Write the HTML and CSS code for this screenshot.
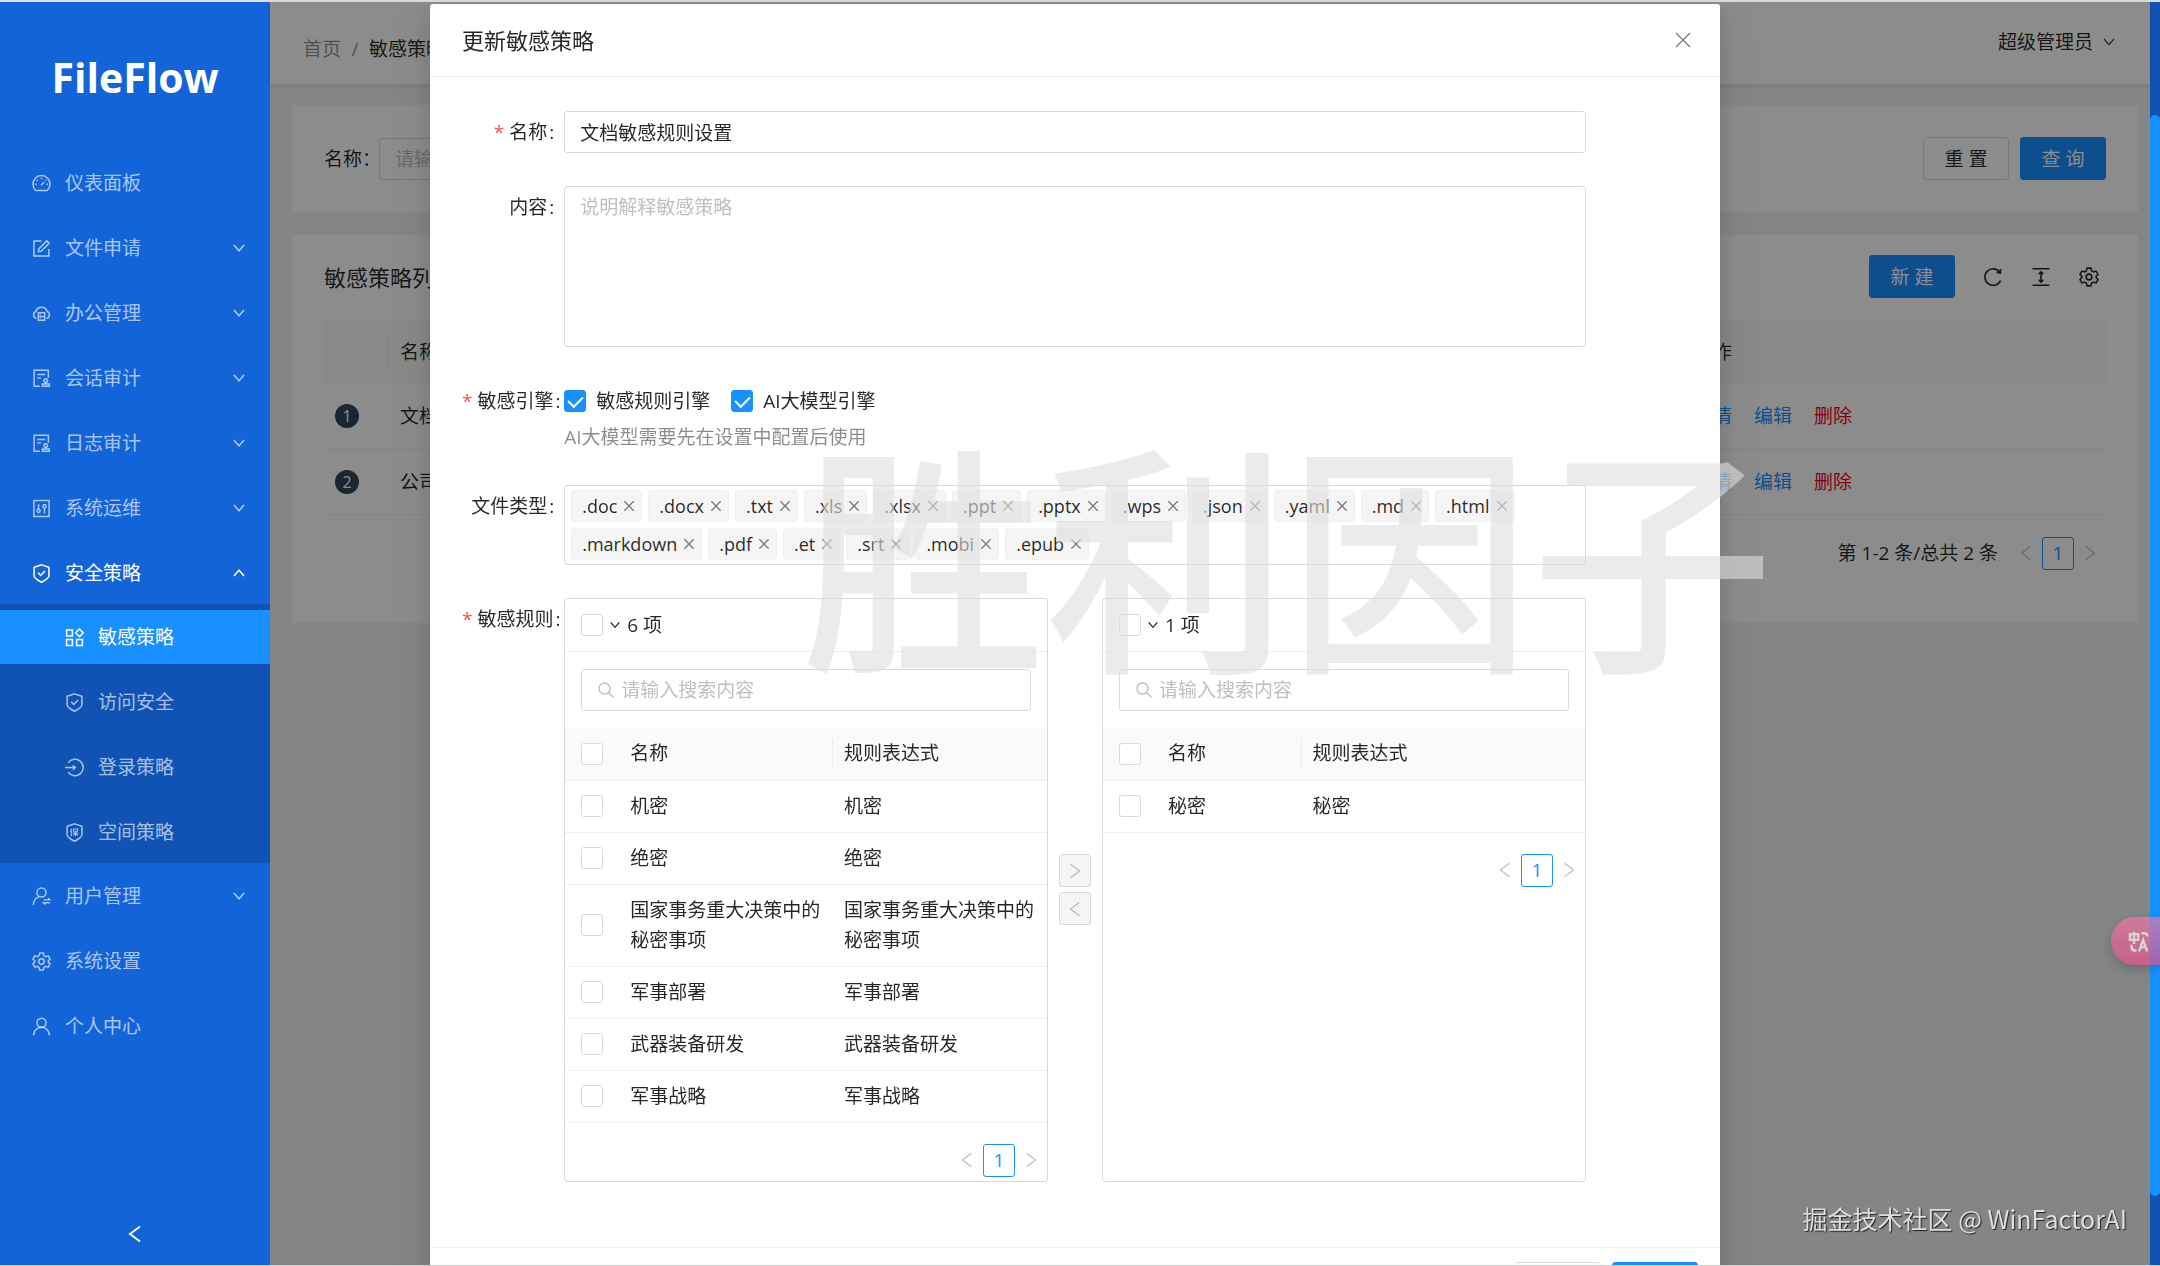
FILE: index.html
```html
<!DOCTYPE html>
<html lang="zh-CN">
<head>
<meta charset="utf-8">
<meta name="viewport" content="width=device-width, initial-scale=1">
<title>FileFlow</title>
<link rel="stylesheet" href="styles.css">
</head>
<body>
<svg class="sprite" aria-hidden="true">
  <symbol id="i-down" viewBox="0 0 18 18"><path d="M2.500 5l6.500 7.500L15.500 5"/></symbol>
  <symbol id="i-up" viewBox="0 0 18 18"><path d="M2.500 13L9 5.500l6.500 7.500"/></symbol>
  <symbol id="i-left" viewBox="0 0 18 18"><path d="M14 1.500L4 9l10 7.500"/></symbol>
  <symbol id="i-right" viewBox="0 0 18 18"><path d="M4 1.500L14 9 4 16.500"/></symbol>
  <symbol id="i-close" viewBox="0 0 18 18"><path d="M2 2l14 14M16 2L2 16"/></symbol>
  <symbol id="i-search" viewBox="0 0 18 18"><circle cx="7.5" cy="7.5" r="5.5"/><path d="M11.5 11.5l5 5"/></symbol>
  <symbol id="i-dashboard" viewBox="0 0 18 18"><path d="M3.6 15.6A8.1 8.1 0 1 1 14.4 15.6z"/><path d="M8.6 10.6l3-3M9 3.6v1.4M4.4 5.4l1 1M2.8 9.8h1.4M13.8 9.8h1.4M13.6 5.4l-.8.8"/></symbol>
  <symbol id="i-form" viewBox="0 0 18 18"><path d="M9 2H1.800v14.200H16V9.500"/><path d="M6 12l.4-2.600L14 1.800l2.200 2.200L8.600 11.600z"/></symbol>
  <symbol id="i-cloud" viewBox="0 0 18 18"><path d="M4.200 13.600A3.500 3.500 0 0 1 3.600 7 5.700 5.700 0 0 1 14.400 7a3.500 3.500 0 0 1-.6 6.600"/><path d="M6 8.200h6v7.200H6zM6 11.800h6M7.800 10h.6M7.800 13.600h.6"/></symbol>
  <symbol id="i-audit" viewBox="0 0 18 18"><path d="M7.500 16.400H2V1.200h13.500v7M5 5.200h7.500M5 8.400h3.500"/><circle cx="13" cy="11" r="1.700"/><path d="M13 12.700v1.300M9.800 16.400v-2.200h6.600v2.200z"/></symbol>
  <symbol id="i-control" viewBox="0 0 18 18"><path d="M1.800 1.500h14.400v15H1.800zM6.200 5v4.600M6.200 12.600V13.400M11.800 4.800v.6M11.800 8.400v5"/><circle cx="6.200" cy="11.100" r="1.500"/><circle cx="11.800" cy="6.900" r="1.500"/></symbol>
  <symbol id="i-safety" viewBox="0 0 18 18"><path d="M9 .8l7 2.300v8c0 1.600-4 4.600-7 6.200-3-1.600-7-4.600-7-6.200v-8z"/><path d="M5.900 8.400l2.400 2.500 4-4.300"/></symbol>
  <symbol id="i-appstore" viewBox="0 0 18 18"><path d="M1.500 2h5.500v5.500H1.500zM1.500 11h5.500v5.500H1.500zM11 11h5.500v5.500H11zM13.700 1l3.600 3.600-3.600 3.600-3.600-3.600z"/></symbol>
  <symbol id="i-login" viewBox="0 0 18 18"><path d="M3 4.600A7.800 7.800 0 1 1 3 13.400M0 9h9.400M7.400 7l2.400 2-2.400 2"/></symbol>
  <symbol id="i-insurance" viewBox="0 0 18 18"><path d="M9 .8l7 2.300v8c0 1.600-4 4.600-7 6.200-3-1.600-7-4.600-7-6.200v-8z"/><path d="M6.400 5.400l-1.200 3M6 7.500v5M8 5.700h4v2.200H8zM7.300 9.500h5.400M10 8v4.600M10 9.700l-2.200 2M10 9.700l2.200 2" stroke-width="1"/></symbol>
  <symbol id="i-switch" viewBox="0 0 18 18"><circle cx="9" cy="5.200" r="4.300"/><path d="M1.200 17c.4-4 2.400-6.600 5.400-7.600M11 12.200h6l-1.600-1.600M17 15h-6l1.600 1.600"/></symbol>
  <symbol id="i-setting" viewBox="0 0 18 18"><path d="M7.300 1h3.400l.6 2.400 1.700 1 2.400-.7 1.700 3-1.700 1.700v1.200l1.700 1.700-1.700 3-2.400-.7-1.700 1-.6 2.400H7.300l-.6-2.400-1.700-1-2.400.7-1.700-3 1.700-1.700V8.400L.9 6.700l1.700-3 2.400.7 1.700-1z"/><circle cx="9" cy="9" r="2.600"/></symbol>
  <symbol id="i-user" viewBox="0 0 18 18"><circle cx="9" cy="5.400" r="4.300"/><path d="M1.400 17.400c.4-4.400 3.400-7.700 7.600-7.700s7.200 3.300 7.600 7.700"/></symbol>
  <symbol id="i-reload" viewBox="0 0 18 18"><path d="M15.800 12.200A7.400 7.400 0 1 1 15 4.600M15.800 1.800l-.2 3.600-3.400-.6"/></symbol>
  <symbol id="i-height" viewBox="0 0 18 18"><path d="M1.400 1.600h15.200M1.400 16.400h15.200M9 4.600v8.800M7 6.400l2-2 2 2M7 11.600l2 2 2-2"/></symbol>
</svg>

<div class="app">
  <aside class="sidebar">
    <h1 class="logo">FileFlow</h1>
    <nav>
      <ul class="menu">
        <li><a class="menu-item" href="#"><svg class="icon"><use href="#i-dashboard"/></svg><span>仪表面板</span></a></li>
        <li><a class="menu-item" href="#"><svg class="icon"><use href="#i-form"/></svg><span>文件申请</span><svg class="icon arrow"><use href="#i-down"/></svg></a></li>
        <li><a class="menu-item" href="#"><svg class="icon"><use href="#i-cloud"/></svg><span>办公管理</span><svg class="icon arrow"><use href="#i-down"/></svg></a></li>
        <li><a class="menu-item" href="#"><svg class="icon"><use href="#i-audit"/></svg><span>会话审计</span><svg class="icon arrow"><use href="#i-down"/></svg></a></li>
        <li><a class="menu-item" href="#"><svg class="icon"><use href="#i-audit"/></svg><span>日志审计</span><svg class="icon arrow"><use href="#i-down"/></svg></a></li>
        <li><a class="menu-item" href="#"><svg class="icon"><use href="#i-control"/></svg><span>系统运维</span><svg class="icon arrow"><use href="#i-down"/></svg></a></li>
        <li>
          <a class="menu-item open" href="#"><svg class="icon"><use href="#i-safety"/></svg><span>安全策略</span><svg class="icon arrow"><use href="#i-up"/></svg></a>
          <ul class="submenu">
            <li><a class="menu-item selected" href="#"><svg class="icon"><use href="#i-appstore"/></svg><span>敏感策略</span></a></li>
            <li><a class="menu-item" href="#"><svg class="icon"><use href="#i-safety"/></svg><span>访问安全</span></a></li>
            <li><a class="menu-item" href="#"><svg class="icon"><use href="#i-login"/></svg><span>登录策略</span></a></li>
            <li><a class="menu-item" href="#"><svg class="icon"><use href="#i-insurance"/></svg><span>空间策略</span></a></li>
          </ul>
        </li>
        <li><a class="menu-item" href="#"><svg class="icon"><use href="#i-switch"/></svg><span>用户管理</span><svg class="icon arrow"><use href="#i-down"/></svg></a></li>
        <li><a class="menu-item" href="#"><svg class="icon"><use href="#i-setting"/></svg><span>系统设置</span></a></li>
        <li><a class="menu-item" href="#"><svg class="icon"><use href="#i-user"/></svg><span>个人中心</span></a></li>
      </ul>
    </nav>
    <button class="collapse" type="button" aria-label="收起"><svg class="icon"><use href="#i-left"/></svg></button>
  </aside>

  <div class="page">
    <header class="topbar">
      <nav class="breadcrumb"><a href="#">首页</a><span class="sep">/</span><span>敏感策略</span></nav>
      <button class="account" type="button">超级管理员<svg class="icon"><use href="#i-down"/></svg></button>
    </header>
    <main class="content">
      <form class="card search-card">
        <label for="q-name">名称：</label>
        <input id="q-name" class="input query" type="text" placeholder="请输入">
        <button class="btn" type="reset">重 置</button>
        <button class="btn primary" type="button">查 询</button>
      </form>
      <section class="card list-card">
        <div class="toolbar">
          <h2>敏感策略列表</h2>
          <button class="btn primary" type="button">新 建</button>
          <button class="tool" type="button" aria-label="刷新"><svg class="icon"><use href="#i-reload"/></svg></button>
          <button class="tool" type="button" aria-label="密度"><svg class="icon"><use href="#i-height"/></svg></button>
          <button class="tool" type="button" aria-label="列设置"><svg class="icon"><use href="#i-setting"/></svg></button>
        </div>
        <table class="list">
          <colgroup><col class="c-index"><col><col class="c-actions"></colgroup>
          <thead><tr><th></th><th>名称</th><th>操作</th></tr></thead>
          <tbody>
            <tr><td><span class="index">1</span></td><td>文档敏感规则设置</td><td><div class="actions"><a href="#">详情</a><a href="#">编辑</a><a class="danger" href="#">删除</a></div></td></tr>
            <tr><td><span class="index">2</span></td><td>公司</td><td><div class="actions"><a href="#">详情</a><a href="#">编辑</a><a class="danger" href="#">删除</a></div></td></tr>
          </tbody>
        </table>
        <div class="pager list-pager">
          <span class="total">第 1-2 条/总共 2 条</span>
          <button type="button" aria-label="上一页"><svg class="icon"><use href="#i-left"/></svg></button>
          <button class="current" type="button">1</button>
          <button type="button" aria-label="下一页"><svg class="icon"><use href="#i-right"/></svg></button>
        </div>
      </section>
    </main>
    <div class="mask"></div>
  </div>

  <div class="scrollbar"><div class="thumb"></div></div>
</div>

<div class="modal-wrap">
  <section class="modal" role="dialog" aria-labelledby="dlg-title">
    <header class="modal-head">
      <h2 id="dlg-title">更新敏感策略</h2>
      <button type="button" aria-label="关闭"><svg class="icon"><use href="#i-close"/></svg></button>
    </header>
    <form class="modal-body">
      <div class="field">
        <label class="label required" for="f-name">名称<i>:</i></label>
        <input id="f-name" class="input" type="text" value="文档敏感规则设置">
      </div>
      <div class="field">
        <label class="label" for="f-desc">内容<i>:</i></label>
        <textarea id="f-desc" class="input area" placeholder="说明解释敏感策略"></textarea>
      </div>
      <div class="field">
        <span class="label required">敏感引擎<i>:</i></span>
        <div>
          <div class="checks">
            <label><input class="check" type="checkbox" checked>敏感规则引擎</label>
            <label><input class="check" type="checkbox" checked>AI大模型引擎</label>
          </div>
          <p class="help">AI大模型需要先在设置中配置后使用</p>
        </div>
      </div>
      <div class="field">
        <span class="label">文件类型<i>:</i></span>
        <div class="tags">
          <span class="tag">.doc<button type="button" aria-label="移除"><svg class="icon"><use href="#i-close"/></svg></button></span>
          <span class="tag">.docx<button type="button" aria-label="移除"><svg class="icon"><use href="#i-close"/></svg></button></span>
          <span class="tag">.txt<button type="button" aria-label="移除"><svg class="icon"><use href="#i-close"/></svg></button></span>
          <span class="tag">.xls<button type="button" aria-label="移除"><svg class="icon"><use href="#i-close"/></svg></button></span>
          <span class="tag">.xlsx<button type="button" aria-label="移除"><svg class="icon"><use href="#i-close"/></svg></button></span>
          <span class="tag">.ppt<button type="button" aria-label="移除"><svg class="icon"><use href="#i-close"/></svg></button></span>
          <span class="tag">.pptx<button type="button" aria-label="移除"><svg class="icon"><use href="#i-close"/></svg></button></span>
          <span class="tag">.wps<button type="button" aria-label="移除"><svg class="icon"><use href="#i-close"/></svg></button></span>
          <span class="tag">.json<button type="button" aria-label="移除"><svg class="icon"><use href="#i-close"/></svg></button></span>
          <span class="tag">.yaml<button type="button" aria-label="移除"><svg class="icon"><use href="#i-close"/></svg></button></span>
          <span class="tag">.md<button type="button" aria-label="移除"><svg class="icon"><use href="#i-close"/></svg></button></span>
          <span class="tag">.html<button type="button" aria-label="移除"><svg class="icon"><use href="#i-close"/></svg></button></span>
          <span class="tag">.markdown<button type="button" aria-label="移除"><svg class="icon"><use href="#i-close"/></svg></button></span>
          <span class="tag">.pdf<button type="button" aria-label="移除"><svg class="icon"><use href="#i-close"/></svg></button></span>
          <span class="tag">.et<button type="button" aria-label="移除"><svg class="icon"><use href="#i-close"/></svg></button></span>
          <span class="tag">.srt<button type="button" aria-label="移除"><svg class="icon"><use href="#i-close"/></svg></button></span>
          <span class="tag">.mobi<button type="button" aria-label="移除"><svg class="icon"><use href="#i-close"/></svg></button></span>
          <span class="tag">.epub<button type="button" aria-label="移除"><svg class="icon"><use href="#i-close"/></svg></button></span>
        </div>
      </div>
      <div class="field">
        <span class="label required">敏感规则<i>:</i></span>
        <div class="transfer">
          <div class="pane">
            <div class="pane-head"><input class="check" type="checkbox" aria-label="全选"><svg class="icon"><use href="#i-down"/></svg><span>6 项</span></div>
            <label class="search"><svg class="icon"><use href="#i-search"/></svg><input type="text" placeholder="请输入搜索内容" aria-label="搜索"></label>
            <table class="rules">
              <colgroup><col class="c-check"><col><col></colgroup>
              <thead><tr><th><input class="check" type="checkbox" aria-label="全选"></th><th>名称</th><th>规则表达式</th></tr></thead>
              <tbody>
                <tr><td><input class="check" type="checkbox" aria-label="机密"></td><td>机密</td><td>机密</td></tr>
                <tr><td><input class="check" type="checkbox" aria-label="绝密"></td><td>绝密</td><td>绝密</td></tr>
                <tr><td><input class="check" type="checkbox" aria-label="秘密事项"></td><td>国家事务重大决策中的秘密事项</td><td>国家事务重大决策中的秘密事项</td></tr>
                <tr><td><input class="check" type="checkbox" aria-label="军事部署"></td><td>军事部署</td><td>军事部署</td></tr>
                <tr><td><input class="check" type="checkbox" aria-label="武器装备研发"></td><td>武器装备研发</td><td>武器装备研发</td></tr>
                <tr><td><input class="check" type="checkbox" aria-label="军事战略"></td><td>军事战略</td><td>军事战略</td></tr>
              </tbody>
            </table>
            <div class="pager">
              <button type="button" aria-label="上一页"><svg class="icon"><use href="#i-left"/></svg></button>
              <button class="current" type="button">1</button>
              <button type="button" aria-label="下一页"><svg class="icon"><use href="#i-right"/></svg></button>
            </div>
          </div>
          <div class="moves">
            <button type="button" disabled aria-label="右移"><svg class="icon"><use href="#i-right"/></svg></button>
            <button type="button" disabled aria-label="左移"><svg class="icon"><use href="#i-left"/></svg></button>
          </div>
          <div class="pane">
            <div class="pane-head"><input class="check" type="checkbox" aria-label="全选"><svg class="icon"><use href="#i-down"/></svg><span>1 项</span></div>
            <label class="search"><svg class="icon"><use href="#i-search"/></svg><input type="text" placeholder="请输入搜索内容" aria-label="搜索"></label>
            <table class="rules">
              <colgroup><col class="c-check"><col class="c-name"><col></colgroup>
              <thead><tr><th><input class="check" type="checkbox" aria-label="全选"></th><th>名称</th><th>规则表达式</th></tr></thead>
              <tbody>
                <tr><td><input class="check" type="checkbox" aria-label="秘密"></td><td>秘密</td><td>秘密</td></tr>
              </tbody>
            </table>
            <div class="pager">
              <button type="button" aria-label="上一页"><svg class="icon"><use href="#i-left"/></svg></button>
              <button class="current" type="button">1</button>
              <button type="button" aria-label="下一页"><svg class="icon"><use href="#i-right"/></svg></button>
            </div>
          </div>
        </div>
      </div>
    </form>
    <footer class="modal-foot">
      <button class="btn" type="button">取 消</button>
      <button class="btn primary" type="button">确 定</button>
    </footer>
  </section>
</div>

<div class="watermark">胜利因子</div>
<div class="credit">掘金技术社区 @ WinFactorAI</div>
<button class="translate" type="button" aria-label="翻译">
  <svg viewBox="0 0 26 28"><path d="M2 5h10v7H2zM7 2v15M16 4h4q3 0 3 4M4 18v3q0 4 4 4h2M13 26l5-14 5 14M15 21h6"/></svg>
</button>
</body>
</html>
```
FILE: styles.css
```css
* { box-sizing: border-box; }

:root {
  --blue: #1890ff;
  --text: rgba(0, 0, 0, .85);
  --line: #f0f0f0;
  --border: #d9d9d9;
}

body {
  margin: 0;
  height: 100vh;
  overflow: hidden;
  color: var(--text);
  font: 19px/30px "Open Sans", "Noto Sans CJK SC", sans-serif;
}

button, input, textarea { font: inherit; color: inherit; }
button { padding: 0; border: 0; background: none; cursor: pointer; }
a { color: var(--blue); text-decoration: none; }
h1, h2, p, ul { margin: 0; padding: 0; font-weight: 400; }
ul { list-style: none; }
table { width: 100%; border-collapse: collapse; table-layout: fixed; }
th { font-weight: 400; text-align: left; }
::placeholder { color: #bfbfbf; opacity: 1; }

.sprite { position: absolute; width: 0; height: 0; }
.icon {
  flex: none;
  display: block;
  width: 18px;
  height: 18px;
  fill: none;
  stroke: currentColor;
  stroke-width: 1.4;
}

.app {
  display: grid;
  grid-template-columns: 270px minmax(0, 1fr) 10px;
  height: 100%;
  border-top: 2px solid #dedede;
  border-bottom: 1px solid #d0d0d0;
}

/* Sidebar */
.sidebar {
  display: flex;
  flex-direction: column;
  background: #1464d9;
  color: rgba(255, 255, 255, .65);
}
.logo {
  padding: 45px 0 49px;
  color: #fff;
  font-size: 41px;
  font-weight: 700;
  line-height: 60px;
  text-align: center;
}
.menu { display: grid; gap: 11px; }
.menu-item {
  display: flex;
  align-items: center;
  gap: 14px;
  height: 54px;
  padding: 0 24px 0 32px;
  color: inherit;
}
.menu-item .icon { width: 19px; height: 19px; }
.menu-item .arrow { width: 14px; height: 14px; margin-left: auto; stroke-width: 2; }
.menu-item.open { color: #fff; }
.submenu {
  display: grid;
  gap: 11px;
  margin: 4px 0 -5px;
  padding: 6px 0 4px;
  background: #1053b4;
}
.submenu .menu-item { padding-left: 65px; }
.menu-item.selected { background: var(--blue); color: #fff; }
.collapse {
  display: grid;
  place-items: center;
  height: 62px;
  margin-top: auto;
  color: #fff;
}
.collapse .icon { width: 18px; height: 18px; stroke-width: 2; }

/* Page behind the dialog */
.page { position: relative; background: #f0f2f5; }
.mask { position: absolute; inset: 0; background: rgba(0, 0, 0, .45); }
.topbar {
  position: relative;
  display: flex;
  align-items: center;
  justify-content: space-between;
  height: 82px;
  padding: 12px 34px 0 33px;
  background: #fff;
  box-shadow: 0 1px 5px rgba(0, 21, 41, .12);
}
.breadcrumb { display: flex; }
.breadcrumb a { color: rgba(0, 0, 0, .45); }
.breadcrumb .sep { width: 28px; text-align: center; color: rgba(0, 0, 0, .45); }
.account { display: flex; align-items: center; gap: 9px; margin-bottom: 14px; }
.account .icon { width: 14px; height: 14px; }

.content { display: grid; gap: 23px; padding: 21px 12px 22px 22px; }
.card { background: #fff; border-radius: 3px; }
.btn {
  width: 86px;
  height: 43px;
  border: 1px solid var(--border);
  border-radius: 3px;
  background: #fff;
}
.btn.primary { border-color: var(--blue); background: var(--blue); color: #fff; }
.input {
  width: 100%;
  height: 42px;
  padding: 0 15px;
  border: 1px solid var(--border);
  border-radius: 3px;
  background: #fff;
}
.search-card { display: flex; align-items: center; gap: 11px; padding: 32px; }
.search-card label { margin-right: -13px; }
.query { width: 380px; margin-right: auto; }

.list-card { padding: 20px 32px 53px; }
.toolbar { display: flex; align-items: center; margin-bottom: 22px; }
.toolbar h2 { margin-right: auto; font-size: 22px; }
.toolbar .btn { margin-right: 14px; }
.tool { display: grid; place-items: center; width: 48px; height: 43px; }
.tool:last-child { margin-right: -7px; }
.tool .icon { width: 20px; height: 20px; }

.c-index { width: 65px; }
.c-actions { width: 423px; }
.list th, .list td { height: 65px; padding: 0 11px; border-bottom: 1px solid var(--line); }
.list th { height: 64px; background: #fafafa; border: 0; }
.list th:first-child {
  background: linear-gradient(#e4e4e4, #e4e4e4) right center / 1px 30px no-repeat #fafafa;
}
.index {
  display: block;
  width: 24px;
  height: 24px;
  border-radius: 50%;
  background: #314659;
  color: #fff;
  font-size: 16px;
  line-height: 24px;
  text-align: center;
}
.actions { display: flex; gap: 22px; }
.danger { color: #f5001d; }

.pager { display: flex; justify-content: flex-end; align-items: center; }
.pager button { display: grid; place-items: center; width: 32px; height: 33px; color: #bfbfbf; }
.pager .icon { width: 16px; height: 16px; }
.pager .current {
  border: 1px solid var(--blue);
  border-radius: 3px;
  background: #fff;
  color: var(--blue);
}
.list-pager { margin-top: 22px; }
.total { margin-right: 12px; }

.scrollbar { padding-top: 113px; background: #1152b4; }
.thumb { height: 94%; border-radius: 5px; background: var(--blue); }

/* Dialog */
.modal-wrap {
  position: fixed;
  inset: 4px 10px 1px 0;
  overflow: hidden;
  clip-path: inset(0 0 0 270px);
  pointer-events: none;
}
.modal {
  width: 60%;
  margin: 0 auto;
  border-radius: 3px 3px 0 0;
  background: #fff;
  box-shadow: 0 8px 22px rgba(0, 0, 0, .12), 0 12px 38px 11px rgba(0, 0, 0, .06);
  pointer-events: auto;
}
.modal-head {
  display: flex;
  justify-content: space-between;
  align-items: center;
  padding: 21px 28px 21px 32px;
  border-bottom: 1px solid var(--line);
}
.modal-head h2 { font-size: 22px; }
.modal-head .icon { color: rgba(0, 0, 0, .5); }
.modal-body { display: grid; gap: 33px; padding: 34px 32px 65px; }
.field { display: grid; grid-template-columns: 2fr 20fr 2fr; }
.field > * { min-width: 0; }
.label { height: 42px; line-height: 42px; text-align: right; white-space: nowrap; }
.label i { margin: 0 10px 0 2px; font-style: normal; }
.required::before { content: "*"; margin-right: 5px; color: #ff4d4f; }
.area { display: block; height: 161px; padding: 5px 15px; resize: none; }

.check {
  flex: none;
  appearance: none;
  display: grid;
  place-items: center;
  width: 22px;
  height: 22px;
  margin: 0;
  border: 1px solid var(--border);
  border-radius: 3px;
  background: #fff;
}
.check:checked { border-color: var(--blue); background: var(--blue); }
.check:checked::after {
  content: "";
  width: 7px;
  height: 12px;
  margin-top: -3px;
  border: solid #fff;
  border-width: 0 2px 2px 0;
  rotate: 45deg;
}
.checks { display: flex; gap: 21px; height: 42px; }
.checks label { display: flex; align-items: center; gap: 10px; }
.help { color: rgba(0, 0, 0, .45); }

.tags {
  display: flex;
  flex-wrap: wrap;
  gap: 6px;
  padding: 4px 6px;
  border: 1px solid var(--border);
  border-radius: 3px;
}
.tag {
  display: flex;
  align-items: center;
  gap: 6px;
  height: 32px;
  padding: 0 6px 0 10px;
  border: 1px solid var(--line);
  border-radius: 3px;
  background: #f5f5f5;
  font-size: 18px;
}
.tag .icon { width: 12px; height: 12px; color: rgba(0, 0, 0, .5); stroke-width: 2; }

.transfer { display: grid; grid-template-columns: minmax(0, 1fr) auto minmax(0, 1fr); }
.pane { border: 1px solid var(--border); border-radius: 3px; }
.pane-head {
  display: flex;
  align-items: center;
  gap: 6px;
  height: 53px;
  padding: 0 16px;
  border-bottom: 1px solid var(--line);
}
.pane-head .icon { width: 12px; height: 12px; stroke-width: 2; }
.search {
  display: flex;
  align-items: center;
  gap: 6px;
  height: 42px;
  margin: 17px 16px;
  padding: 0 15px;
  border: 1px solid var(--border);
  border-radius: 3px;
  color: #bfbfbf;
}
.search input { width: 100%; padding: 0; border: 0; outline: 0; }
.c-check { width: 54px; }
.c-name { width: 30%; }
.rules th, .rules td { height: 52px; padding: 10px 11px 11px; border-bottom: 1px solid var(--line); }
.rules th { background: #fafafa; }
.rules th:nth-child(2) {
  background: linear-gradient(#ececec, #ececec) right center / 1px 30px no-repeat #fafafa;
}
.rules th:first-child, .rules td:first-child { padding: 0 16px; }
.pane .pager { padding: 21px 0 4px; }
.moves {
  display: flex;
  flex-direction: column;
  justify-content: center;
  gap: 5px;
  padding: 0 11px;
}
.moves button {
  display: grid;
  place-items: center;
  width: 32px;
  height: 33px;
  border: 1px solid var(--border);
  border-radius: 3px;
  background: #f5f5f5;
  color: #b8b8b8;
}
.moves .icon { width: 16px; height: 16px; }
.modal-foot {
  display: flex;
  justify-content: flex-end;
  gap: 11px;
  padding: 14px 22px;
  border-top: 1px solid var(--line);
}

/* Overlays */
.watermark {
  position: fixed;
  top: 427px;
  left: 802px;
  color: rgba(221, 221, 221, .6);
  font: 500 243px/243px "Noto Sans CJK SC", sans-serif;
  white-space: nowrap;
  pointer-events: none;
}
.credit {
  position: fixed;
  right: 33px;
  bottom: 30px;
  color: #dedede;
  font: 25px/36px "Noto Sans CJK SC", sans-serif;
  text-shadow: 1px 1px 1px #222;
}
.translate {
  position: fixed;
  top: 917px;
  right: 0;
  display: flex;
  align-items: center;
  width: 49px;
  height: 48px;
  padding-left: 17px;
  border-radius: 24px 0 0 24px;
  background: linear-gradient(#f07aa5, #ee4c88);
  box-shadow: 0 4px 12px rgba(0, 0, 0, .3);
  opacity: .65;
}
.translate svg { width: 22px; height: 23px; fill: none; stroke: #fff; stroke-width: 3; }
```
